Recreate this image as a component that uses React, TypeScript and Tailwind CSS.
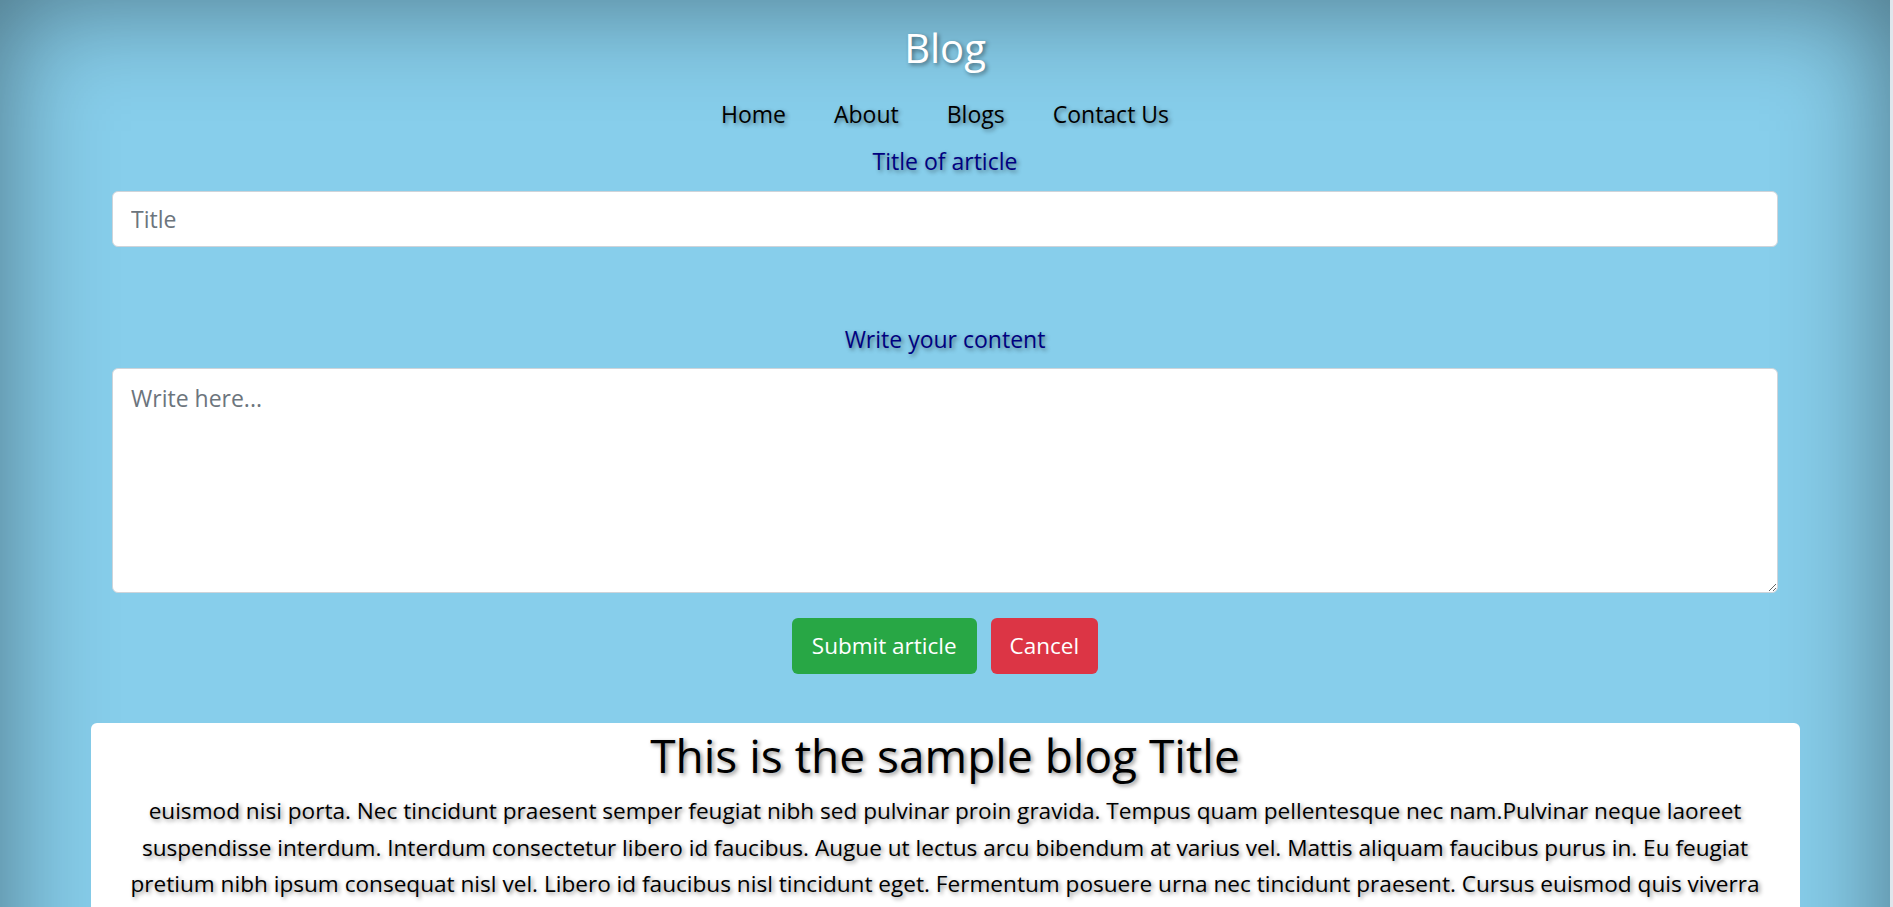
import React from "react";

const shadow = "[text-shadow:2px_2px_4px_rgba(0,0,0,0.45)]";

export default function App() {
  return (
    <div
      className="min-h-screen bg-[#87ceeb] shadow-[inset_0_0_110px_rgba(0,0,0,0.45)] border-r-[3px] border-[#dfe6ec] pb-[200px]"
      style={{ fontFamily: '"Open Sans", "Noto Sans", sans-serif' }}
    >
      <h1 className={`pt-[24px] text-center text-[40px] leading-[48px] font-normal text-white ${shadow}`}>
        Blog
      </h1>

      <nav className={`mt-[27px] flex justify-center gap-[48px] text-[23px] leading-[30px] text-black ${shadow}`}>
        <a href="#">Home</a>
        <a href="#">About</a>
        <a href="#">Blogs</a>
        <a href="#">Contact Us</a>
      </nav>

      <div className="px-[112px]">
        <div className={`mt-[17px] text-center text-[23px] leading-[30px] text-[#000080] ${shadow}`}>
          Title of article
        </div>
        <input
          type="text"
          placeholder="Title"
          className="mt-[15px] block h-[56px] w-full rounded-[6px] border border-[#ced4da] bg-white pl-[18px] pr-[18px] text-[23px] leading-[36px] text-[#495057] placeholder:text-[#6c757d] outline-none"
        />

        <div className={`mt-[77px] text-center text-[23px] leading-[30px] text-[#000080] ${shadow}`}>
          Write your content
        </div>
        <textarea
          placeholder="Write here..."
          className="mt-[14px] block h-[225px] w-full rounded-[6px] border border-[#ced4da] bg-white pl-[18px] pr-[18px] pt-[11px] text-[23px] leading-[36px] text-[#495057] placeholder:text-[#6c757d] outline-none"
        />

        <div className="mt-[25px] flex justify-center gap-[14px]">
          <button className="h-[56px] rounded-[6px] bg-[#28a745] px-[20px] text-[22.5px] leading-[36px] text-white">
            Submit article
          </button>
          <button className="h-[56px] rounded-[6px] bg-[#dc3545] px-[19px] text-[22.5px] leading-[36px] text-white">
            Cancel
          </button>
        </div>
      </div>

      <div className="mx-auto mt-[49px] w-[1709px] rounded-[6px] bg-white px-[24px] pb-[24px]">
        <h2 className={`pt-[4px] text-center text-[46px] leading-[56px] font-normal text-black ${shadow}`}>
          This is the sample blog Title
        </h2>
        <p className={`mt-[10px] text-center text-[22.6px] leading-[36.5px] text-black ${shadow}`}>
          euismod nisi porta. Nec tincidunt praesent semper feugiat nibh sed pulvinar proin gravida. Tempus quam
          pellentesque nec nam.Pulvinar neque laoreet suspendisse interdum. Interdum consectetur libero id faucibus.
          Augue ut lectus arcu bibendum at varius vel. Mattis aliquam faucibus purus in. Eu feugiat pretium nibh ipsum
          consequat nisl vel. Libero id faucibus nisl tincidunt eget. Fermentum posuere urna nec tincidunt praesent.
          Cursus euismod quis viverra nibh cras pulvinar mattis nunc sed. Blandit libero volutpat sed cras ornare arcu
          dui vivamus arcu. Viverra accumsan in nisl nisi scelerisque eu ultrices vitae auctor. Sit amet consectetur
          adipiscing elit ut aliquam purus sit amet.
        </p>
      </div>
    </div>
  );
}
